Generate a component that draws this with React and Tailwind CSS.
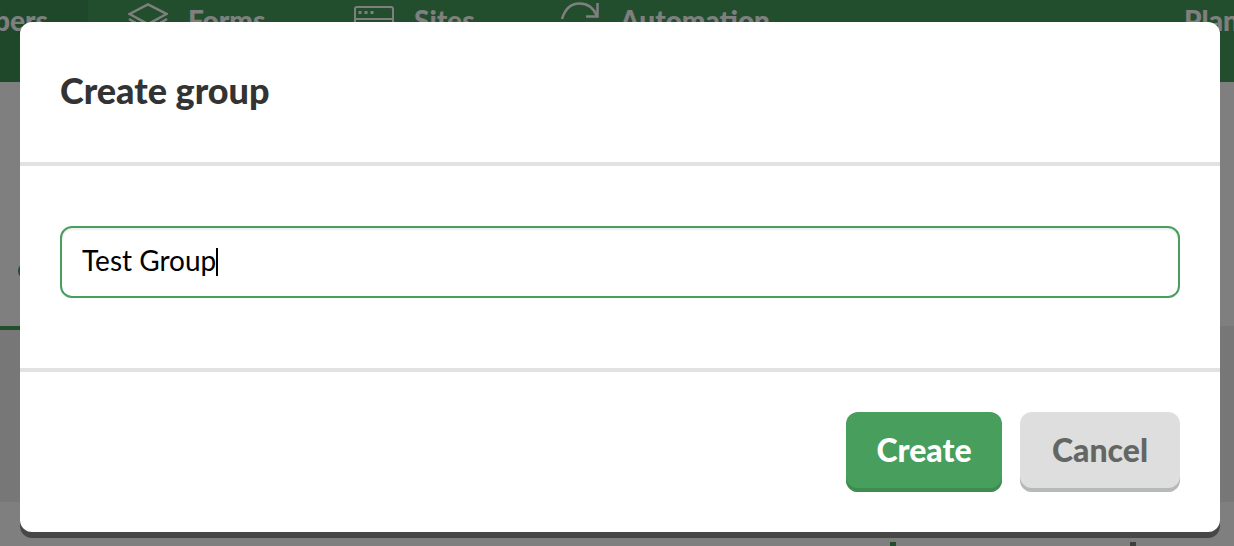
import { useState } from 'react';

const FormsIcon = () => (
  <svg className="mt-0.5 h-10 w-10" viewBox="0 0 40 40" fill="none" stroke="currentColor" strokeWidth="2.500">
    <path d="M1.500 12 20 2.500 38.500 12 20 22z" />
    <path d="M1 17l19 11 19-11" />
    <path d="M1 23l19 11 19-11" />
  </svg>
);

const SitesIcon = () => (
  <svg className="mt-0.5 h-10 w-10" viewBox="0 0 40 40" fill="none" stroke="currentColor" strokeWidth="2">
    <rect x="1" y="5" width="38" height="32" rx="2" />
    <path d="M1 17h38" />
    <path d="M4.500 10.500h3M10.500 10.500h3M16.500 10.500h3" strokeWidth="3" />
  </svg>
);

const AutomationIcon = () => (
  <svg className="mt-0.5 h-10 w-10" viewBox="0 0 40 40" fill="none" stroke="currentColor" strokeWidth="2.500">
    <path d="M2 17C5 7 11 1.500 19.500 1.500 28 1.500 34 7 37 14" />
    <path d="M37.500 1v13.500H26" />
    <path d="M38 23c-3 9-10 14-18 14S6 33 3 26" />
    <path d="M2 38V26h12" />
  </svg>
);

const tabs = [
  { label: 'Forms', icon: FormsIcon, width: 'w-[226px]' },
  { label: 'Sites', icon: SitesIcon, width: 'w-[206px]' },
  { label: 'Automation', icon: AutomationIcon, width: 'w-[300px]' },
];

const Header = () => (
  <header className="flex h-[82px] bg-[#449c5a] text-[28px] leading-10 font-black text-white">
    <a href="#subscribers" className="flex w-[88px] shrink-0 justify-end overflow-hidden bg-[#3f9054] pr-10">
      Subscribers
    </a>
    {tabs.map(({ label, icon: Icon, width }) => (
      <a key={label} href={`#${label.toLowerCase()}`} className={`flex shrink-0 gap-5 pl-10 ${width}`}>
        <Icon />
        {label}
      </a>
    ))}
    <a href="#plan" className="ml-auto w-[50px] shrink-0 overflow-hidden whitespace-nowrap">
      Plan
    </a>
  </header>
);

const Page = () => (
  <div className="bg-white">
    <Header />
    <div className="h-[244px] pt-[181px] pl-[18px]">
      <div className="h-4 w-4 rounded-full bg-[#449c5a]" />
    </div>
    <div className="h-44 bg-[#eeeeee]">
      <div className="h-1 w-1/4 bg-[#449c5a]" />
    </div>
    <div className="flex justify-end gap-[234px] pt-10 pr-[98px]">
      <span className="h-1 w-1.5 bg-[#449c5a]" />
      <span className="h-1 w-1.5 bg-[#7b827c]" />
    </div>
  </div>
);

const CreateGroupModal = () => {
  const [name, setName] = useState('Test Group');
  const [focused, setFocused] = useState(false);

  return (
    <form
      role="dialog"
      aria-labelledby="modal-title"
      onSubmit={(e) => e.preventDefault()}
      className="w-full rounded-xl bg-white shadow-[0_6px_0_#474747]"
    >
      <div className="border-b-4 border-[#e2e2e2] px-10 pt-11 pb-12">
        <h2 id="modal-title" className="text-4xl leading-[48px] font-black text-[#333333]">Create group</h2>
      </div>

      <div className="px-10 pt-15 pb-[70px]">
        <div className="relative">
          <input
            type="text"
            aria-label="Group name"
            value={name}
            onChange={(e) => setName(e.target.value)}
            onFocus={() => setFocused(true)}
            onBlur={() => setFocused(false)}
            className="block h-[72px] w-full rounded-xl border-2 border-[#489e5d] px-5 pb-1 text-[28px] text-black shadow-[inset_0_2px_2px_#eeeeee] outline-none"
          />
          {/* Caret */}
          {!focused && <span className="absolute top-[22px] left-[156px] h-7 w-0.5 bg-black" />}
        </div>
      </div>

      <div className="flex justify-end gap-[18px] border-t-4 border-[#e2e2e2] p-10">
        <button
          type="submit"
          className="h-20 w-[156px] rounded-xl bg-[#489e5d] pb-1 text-[32px] font-black text-white shadow-[inset_0_-4px_0_#3e8c50]"
        >
          Create
        </button>
        <button
          type="button"
          className="h-20 w-40 rounded-xl bg-[#dedede] pb-1 text-[32px] font-black text-[#646663] shadow-[inset_0_-4px_0_#b6bab6]"
        >
          Cancel
        </button>
      </div>
    </form>
  );
};

export default function App() {
  return (
    <div className="relative min-h-screen overflow-hidden bg-white font-['Lato',sans-serif]">
      <Page />
      <div className="absolute inset-0 flex items-start bg-black/50 pt-[22px] pr-3.5 pl-5">
        <CreateGroupModal />
      </div>
    </div>
  );
}
